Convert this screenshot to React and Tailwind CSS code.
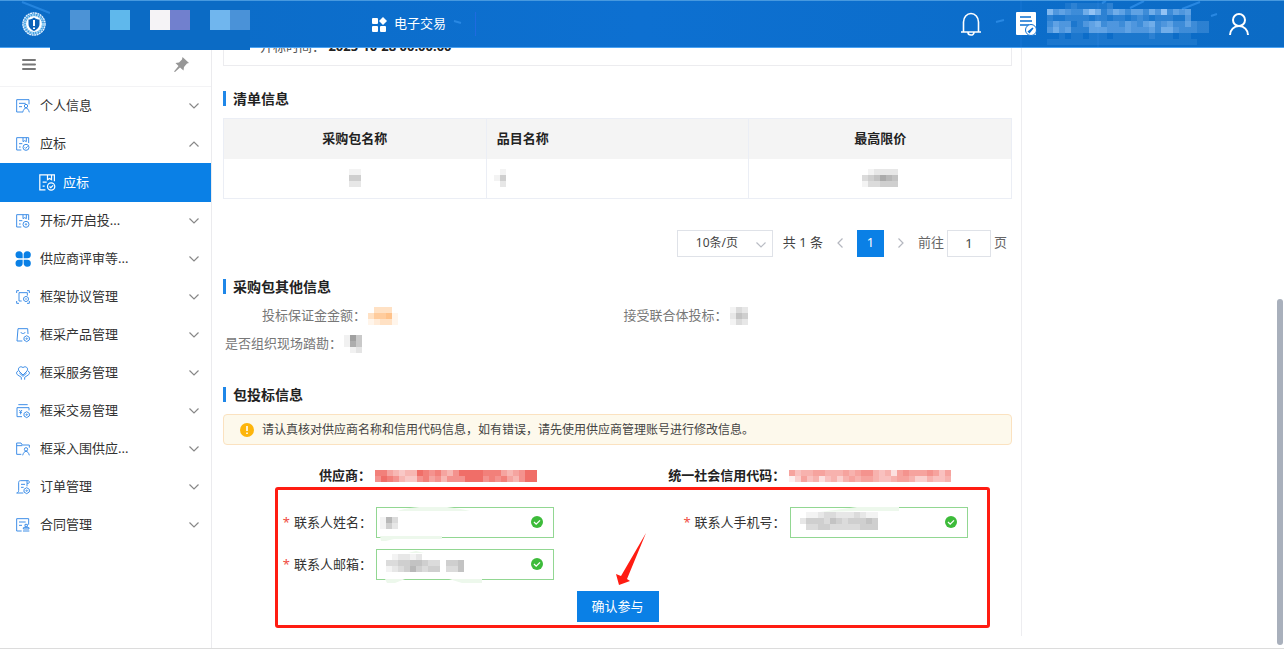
import React, { useState } from 'react';

const strokeProps = {
  viewBox: '0 0 42 42',
  fill: 'none',
  stroke: 'currentColor',
  strokeWidth: 3,
  'aria-hidden': true,
};

const hexGear = (
  <>
    <path d="M32 23l8 5v8l-8 5-8-5v-8z" />
    <circle cx="32" cy="32" r="2" />
  </>
);

const icons = {
  profile: (
    <>
      <path d="M39 16V2H2v37h18M9 13h20M9 23h9" />
      <circle cx="30" cy="21" r="5" />
      <path d="M20 40c2-8 6-13 10-13s8 5 10 13" />
    </>
  ),
  bid: (
    <>
      <path d="M16 39H2V2h36v16M21 2v12l5-3 5 3V2M9 20h10M9 30h5" />
      <circle cx="30" cy="31" r="9" />
      <path d="M26 31l3 3 6-6" />
    </>
  ),
  open: (
    <>
      <path d="M16 39H2V2h36v16M21 2v12l5-3 5 3V2M9 20h10M9 30h5" />
      <circle cx="30" cy="31" r="9" />
      <circle cx="30" cy="31" r="2" />
    </>
  ),
  supplier: (
    <g fill="#0a80e6" stroke="none">
      <path d="M9-2a10 10 0 0 0 0 21h11V9A10 10 0 0 0 9-2z" />
      <path d="M34-2a10 10 0 0 1 0 21H23V9A10 10 0 0 1 34-2z" />
      <path d="M9 44a10 10 0 0 1 0-21h11v10A10 10 0 0 1 9 44z" />
      <path d="M34 44a10 10 0 0 0 0-21H23v10a10 10 0 0 0 11 11z" />
    </g>
  ),
  agreement: (
    <>
      <path d="M2 9V2h7M33 2h7v7M2 33v7h7M33 40h7v-7" />
      <path d="M17 33H9V8h25v9" />
      <path d="M30 19l7 4v8l-7 4-7-4v-8z" />
      <circle cx="30" cy="27" r="1" />
    </>
  ),
  product: (
    <>
      <path d="M19 39H3L6 2h29l1 16M14 12c3 6 11 6 14 0" />
      {hexGear}
    </>
  ),
  service: (
    <>
      <path d="M21 27L9 15C3 6 14-2 21 5c7-7 18 1 12 10z" />
      <path d="M6 15c-6 3-5 8-2 11l12 8v7M36 15c6 3 5 8 2 11l-12 8v7M10 21l11 10 11-10" />
    </>
  ),
  trade: (
    <>
      <path d="M7 2h28M18 38H3V11h36v8M10 18l4 5 4-5M14 23v8M10 25h8" />
      {hexGear}
    </>
  ),
  shortlist: (
    <>
      <path d="M16 37H2V3h13l4 6h21v8M2 11h17" />
      <circle cx="30" cy="22" r="5" />
      <path d="M20 40c2-8 6-12 10-12s8 4 10 12" />
    </>
  ),
  order: (
    <>
      <path d="M22 39H2c5-2 6-4 6-8V7c0-3 2-5 5-5h24c4 1 4 8 0 8h-4V2M15 13h12M15 22h8M33 10v9" />
      {hexGear}
    </>
  ),
  contract: (
    <>
      <path d="M17 39H2V2h36v18M9 12h20M9 22h9" />
      <path d="M27 19h7v7h-7zM22 29h17v4H22zM21 39h19" />
    </>
  ),
};

const menu = [
  { icon: 'profile', label: '个人信息' },
  { icon: 'bid', label: '应标', open: true, children: ['应标'] },
  { icon: 'open', label: '开标/开启投...' },
  { icon: 'supplier', label: '供应商评审等...' },
  { icon: 'agreement', label: '框架协议管理' },
  { icon: 'product', label: '框采产品管理' },
  { icon: 'service', label: '框采服务管理' },
  { icon: 'trade', label: '框采交易管理' },
  { icon: 'shortlist', label: '框采入围供应...' },
  { icon: 'order', label: '订单管理' },
  { icon: 'contract', label: '合同管理' },
];

// Masked values: every digit is the strength of one 6px cell
function Mosaic({ rows, color, className = '' }) {
  const cols = Math.max(...rows.map((r) => r.length));
  return (
    <svg
      className={`shrink-0 ${className}`}
      width={cols * 6}
      height={rows.length * 6}
      shapeRendering="crispEdges"
      aria-hidden="true"
    >
      {rows.map((row, y) =>
        row.split('').map((c, x) => (
          <rect key={`${x}-${y}`} x={x * 6} y={y * 6} width="6" height="6" fill={color} opacity={Number(c) / 10} />
        ))
      )}
    </svg>
  );
}

function Chevron({ className = '' }) {
  return (
    <svg className={className} viewBox="0 0 10 6" width="10" height="6" fill="none" stroke="currentColor" strokeWidth="1.2" aria-hidden="true">
      <path d="M.5.5L5 5 9.500.5" />
    </svg>
  );
}

function Logo() {
  return (
    <svg width="24" height="24" viewBox="0 0 48 48" aria-hidden="true">
      <circle cx="24" cy="24" r="22" fill="none" stroke="#e4f2ff" strokeWidth="3" strokeDasharray="4 1" />
      <circle cx="24" cy="24" r="18" fill="none" stroke="#8fd0f6" strokeWidth="5" strokeDasharray="4 1" />
      <circle cx="24" cy="24" r="16" fill="#fff" />
      <path d="M24 11c4 3 7 4 11 4v9c0 7-5 11-11 14-6-3-11-7-11-14v-9c4 0 7-1 11-4z" fill="#0b62b8" />
      <path d="M24 16v12M24 31v3" stroke="#fff" strokeWidth="4" />
    </svg>
  );
}

function Header() {
  return (
    <header className="relative z-10 flex h-12 shrink-0 items-center border-y border-t-[#4799df] border-b-[#4ba3f3] bg-linear-to-r from-[#0b6bc5] via-[#0d70d1] to-[#0b6bc5] pr-[33px] pl-[22px] text-white">
      <svg className="absolute inset-0 h-full w-full" fill="none" stroke="#2f8fe8" aria-hidden="true">
        <path d="M22 1L50 12M198 0l8 2M230 0l16 7" strokeWidth="2" opacity=".7" />
        <path d="M454 20l7 2M996 21l8-2M1130 7l14-7M1182 8l18-7M1211 15l6-2M1102 2l4-2" strokeWidth="2" opacity=".8" />
        <path d="M1021 0v46M1098 0v46" opacity=".3" />
      </svg>
      <Logo />
      {/* masked navigation entries */}
      <div className="relative ml-1 flex h-[49px] w-[200px] shrink-0 self-start bg-[#0b6bc5] pt-[9px] pl-5">
        <span className="size-5 bg-[#4c93d6]" />
        <span className="ml-5 size-5 bg-[#5fb8ec]" />
        <span className="ml-5 size-5 bg-[#f5f3f6]" />
        <span className="size-5 bg-[#7180ce]" />
        <span className="ml-5 size-5 bg-[#70b6ee]" />
        <span className="size-5 bg-[#4a92d8]" />
      </div>
      <a href="#trade" className="relative ml-[122px] flex items-center gap-[7px] text-[13px] whitespace-nowrap">
        <svg width="15" height="15" viewBox="0 0 15 15" fill="currentColor" aria-hidden="true">
          <rect x="0" y="1" width="6" height="6" rx="1" />
          <rect x="0" y="9" width="6" height="6" rx="1" />
          <rect x="8" y="9" width="6" height="6" rx="1" />
          <path d="M11 0l4 4-4 4-4-4z" />
        </svg>
        电子交易
      </a>
      <span className="relative ml-[29px] h-6 w-px bg-[#1f6be0]" />
      <div className="relative ml-auto flex items-center">
        <button type="button" aria-label="通知">
          <svg width="22" height="24" viewBox="0 0 22 24" fill="none" stroke="currentColor" strokeWidth="1.6" aria-hidden="true">
            <path d="M1 20h20M3.500 20V10a7.500 8.500 0 0 1 15 0v10M8 20.500a3 2.500 0 0 0 6 0" />
          </svg>
        </button>
        <button type="button" aria-label="待办" className="ml-[33px]">
          <svg width="22" height="24" viewBox="0 0 22 24" aria-hidden="true">
            <rect x="1" y="0" width="20" height="23" rx="1" fill="#fff" />
            <path d="M5 5h11M5 9h12M5 13h9" stroke="#0d70d1" strokeWidth="1.400" />
            <circle cx="16" cy="18" r="5.500" fill="#fff" stroke="#0d70d1" />
            <path d="M12.500 19.500l5-4 1 1-4 5z" fill="#0d70d1" />
          </svg>
        </button>
        <Mosaic
          className="ml-2.5"
          color="#b4d8ff"
          rows={[
            '000121111120000000000000000',
            '745433686246535536483545000',
            '211222212212212321222114000',
            '354412456344354356345335322',
            '464522255544454445366433322',
            '001011011101111112111011000',
            '111111111111111111111111100',
          ]}
        />
        <button type="button" aria-label="账号" className="ml-[18px]">
          <svg width="24" height="24" viewBox="0 0 24 24" fill="none" stroke="currentColor" strokeWidth="2" aria-hidden="true">
            <circle cx="12" cy="8" r="6" />
            <path d="M3 23c0-5 4-9 9-9s9 4 9 9" />
          </svg>
        </button>
      </div>
    </header>
  );
}

function Sidebar() {
  return (
    <aside className="w-[212px] shrink-0 border-r border-[#ebebee]">
      <div className="flex h-[39px] items-center justify-between border-b border-[#f3f3f5] px-[22px] pb-1.5">
        <button type="button" aria-label="收起菜单" className="text-[#777]">
          <svg width="14" height="13" viewBox="0 0 14 13" stroke="currentColor" strokeWidth="2" strokeLinecap="round" aria-hidden="true">
            <path d="M1 2h12M1 6.500h12M1 11h12" />
          </svg>
        </button>
        <button type="button" aria-label="固定菜单" className="text-[#979797]">
          <svg width="15" height="15" viewBox="0 0 15 15" fill="currentColor" aria-hidden="true">
            <path d="M8.500 0L15 6l-2 .5-3 3.500-.5 3.500L6 10.500 1 15l-1-.5L4.500 9 1.500 6 5 5.500 8 2.500z" />
          </svg>
        </button>
      </div>
      <nav className="text-[13px] text-[#333]">
        {menu.map((item) => (
          <div key={item.label}>
            <a href="#menu" className="flex h-[38px] items-center pr-3 pl-4">
              <svg {...strokeProps} className="size-3.5 shrink-0 overflow-visible text-[#3f8fe8]">
                {icons[item.icon]}
              </svg>
              <span className="ml-2.5 flex-1">{item.label}</span>
              <Chevron className={item.open ? 'rotate-180 text-[#888]' : 'text-[#888]'} />
            </a>
            {item.children?.map((child) => (
              <a key={child} href="#bid" className="flex h-[39px] items-center bg-[#0a80e6] pl-[39px] text-white">
                <svg {...strokeProps} className="size-[17px]">
                  {icons.bid}
                </svg>
                <span className="ml-[7px]">{child}</span>
              </a>
            ))}
          </div>
        ))}
      </nav>
    </aside>
  );
}

function SectionTitle({ className = '', children }) {
  return (
    <h2 className={`flex h-[15px] items-center border-l-[3px] border-[#1f87e8] pl-[7px] text-sm font-bold text-[#222] ${className}`}>
      {children}
    </h2>
  );
}

function Pagination() {
  const [page, setPage] = useState('1');
  return (
    <div className="mt-[30px] flex h-7 items-center justify-end gap-[7px] pr-[5px] text-[13px] whitespace-nowrap text-[#444]">
      <div className="relative mr-[3px]">
        <select aria-label="每页条数" className="h-[27px] w-24 appearance-none border border-[#dfe2e8] bg-white pl-[18px] text-xs">
          <option>10条/页</option>
        </select>
        <Chevron className="absolute top-3 right-[7px] text-[#b9bcc4]" />
      </div>
      <span>共 1 条</span>
      <button type="button" aria-label="上一页" className="flex w-5 justify-center text-[#b4b7bf]">
        <Chevron className="rotate-90" />
      </button>
      <button type="button" className="size-[27px] bg-[#0a80e6] text-white">1</button>
      <button type="button" aria-label="下一页" className="flex w-5 justify-center text-[#b4b7bf]">
        <Chevron className="-rotate-90" />
      </button>
      <label className="flex items-center gap-[3px] text-[#666]">
        前往
        <input
          value={page}
          onChange={(e) => setPage(e.target.value)}
          className="h-[27px] w-11 border border-[#dfe2e8] text-center text-[#444]"
        />
        页
      </label>
    </div>
  );
}

function Field({ id, label, children }) {
  return (
    <div className="flex items-center">
      <label htmlFor={id} className="flex w-[98px] shrink-0 justify-end pr-1 whitespace-nowrap">
        <span className="mr-1 text-[#f04b42]">*</span>
        {label}：
      </label>
      <div className="relative">
        <input id={id} className="block h-[31px] w-[178px] border border-[#92d792] bg-white px-2" />
        {children}
        <svg className="absolute top-[9px] right-[11px]" width="12" height="12" viewBox="0 0 12 12" aria-hidden="true">
          <circle cx="6" cy="6" r="6" fill="#3dbb3a" />
          <path d="M3 6l2.200 2.200L9 4.400" fill="none" stroke="#fff" strokeWidth="1.300" />
        </svg>
      </div>
    </div>
  );
}

function BidForm() {
  return (
    <>
      <div className="mt-5 mr-[25px] ml-[54px] grid h-[22px] grid-cols-[7fr_5fr] items-center text-[13px] font-bold text-[#222]">
        <div className="flex items-center">
          <span className="flex w-[98px] shrink-0 justify-end pr-1 whitespace-nowrap">供应商：</span>
          <Mosaic color="#ec4a42" rows={['775434487675468888777545688', '687643367564666888676754688']} />
        </div>
        <div className="flex items-center">
          <span className="flex w-[98px] shrink-0 justify-end pr-1 whitespace-nowrap">统一社会信用代码：</span>
          <Mosaic color="#f0655e" rows={['645566555656775452676667646', '136452453565665445665335445']} />
        </div>
      </div>
      <form
        onSubmit={(e) => e.preventDefault()}
        className="mr-[22px] ml-[52px] rounded-[3px] border-[3px] border-[#ff1c12] pt-[17px] pb-[3px] text-[13px] text-[#333]"
      >
        <div className="grid grid-cols-[7fr_5fr] gap-y-[11px]">
          <Field id="name" label="联系人姓名">
            <svg className="absolute top-0 left-0" width="178" height="34" fill="#edf8ec" aria-hidden="true">
              <path d="M21 4Q38-1 54 0h17Q86 2 94 4zM4 29h62v3H18l-8 2H5z" />
            </svg>
            <Mosaic className="absolute top-2.5 left-1" color="#888" rows={['163', '142']} />
          </Field>
          <Field id="phone" label="联系人手机号">
            <svg className="absolute top-0 left-0" width="178" height="31" fill="#edf8ec" aria-hidden="true">
              <path d="M30 5L67 0h42v4H70z" />
            </svg>
            <Mosaic className="absolute top-[5px] left-2.5" color="#888" rows={['0112332223211', '2444354344454', '0334433333444']} />
          </Field>
          <Field id="email" label="联系人邮箱">
            <svg className="absolute top-0 left-0" width="178" height="35" fill="#edf8ec" aria-hidden="true">
              <path d="M32 4l8-2 8 2zM9 30h20l-10 4h-8zM73 30h33v4H86z" />
            </svg>
            <Mosaic className="absolute top-[5px] left-2.5" color="#888" rows={['0122120000000', '3344554330445', '1234643440335']} />
          </Field>
        </div>
        <div className="mt-[11px] flex justify-center pr-[30px]">
          <div className="relative">
            <button type="submit" className="block h-[31px] w-[82px] bg-[#0a80e6] text-[13px] text-white">
              确认参与
            </button>
            <svg className="pointer-events-none absolute -top-[58px] left-[38px]" width="33" height="53" fill="#ff1c12" aria-hidden="true">
              <path d="M31 0L6 43 1 41l3 11 11-4-3-2z" />
            </svg>
          </div>
        </div>
      </form>
    </>
  );
}

function Content() {
  return (
    <main className="min-w-0 flex-1 border-r border-[#ededf0] pr-[9px] pl-[11px]">
      {/* tail of the previous card, scrolled under the header */}
      <section className="flex h-[18px] flex-col justify-end border border-t-0 border-[#ececef] pb-[10px] pl-9">
        <p className="text-[13px] leading-[18px] whitespace-nowrap text-[#555]">
          开标时间： <b className="text-[#222]">2025-10-28 00:00:00</b>
        </p>
      </section>

      <SectionTitle className="mt-[25px]">清单信息</SectionTitle>
      <table className="mt-3 w-full table-fixed border border-[#ebeef5] text-[13px]">
        <thead>
          <tr className="h-10 bg-[#f4f4f4] text-[#222]">
            <th className="border-r border-[#ebeef5]">采购包名称</th>
            <th className="border-r border-[#ebeef5] pl-[10px] text-left">品目名称</th>
            <th>最高限价</th>
          </tr>
        </thead>
        <tbody>
          <tr className="h-10">
            <td className="border-r border-[#ebeef5]">
              <Mosaic className="mx-auto" color="#888" rows={['11', '44', '22']} />
            </td>
            <td className="border-r border-[#ebeef5] pl-[7px]">
              <Mosaic color="#888" rows={['01', '14', '02']} />
            </td>
            <td>
              <Mosaic className="mx-auto" color="#888" rows={['012222', '345765', '133444']} />
            </td>
          </tr>
        </tbody>
      </table>
      <Pagination />

      <SectionTitle className="mt-[22px]">采购包其他信息</SectionTitle>
      <div className="mt-2 grid grid-cols-2 text-[13px] text-[#777]">
        <div className="flex h-7 items-center gap-0.5 pl-[39px]">
          投标保证金金额：
          <Mosaic color="#ff9a3c" rows={['03330', '35561', '12331']} />
        </div>
        <div className="flex h-7 items-center gap-0.5 pl-1.5">
          接受联合体投标：
          <Mosaic color="#888" rows={['132', '254', '132']} />
        </div>
        <div className="flex h-7 items-center gap-0.5 pl-0.5">
          是否组织现场踏勘：
          <Mosaic color="#777" rows={['174', '164', '012']} />
        </div>
      </div>

      <SectionTitle className="mt-[29px]">包投标信息</SectionTitle>
      <div role="alert" className="mt-3 flex h-[31px] items-center rounded-sm border border-[#fbe2c0] bg-[#fdf9ec] pl-4 text-xs text-[#444]">
        <svg className="mr-2 shrink-0" width="14" height="14" viewBox="0 0 14 14" aria-hidden="true">
          <circle cx="7" cy="7" r="7" fill="#fdb50c" />
          <path d="M7 3v5M7 9.500v1.500" stroke="#fff" strokeWidth="1.600" />
        </svg>
        请认真核对供应商名称和信用代码信息，如有错误，请先使用供应商管理账号进行修改信息。
      </div>
      <BidForm />
    </main>
  );
}

export default function App() {
  return (
    <div className="flex h-screen flex-col overflow-hidden border-b border-[#dcdcdc] bg-white font-['Noto_Sans','Noto_Sans_CJK_SC',sans-serif]">
      <Header />
      <div className="flex min-h-0 flex-1">
        <Sidebar />
        <div className="flex min-w-0 flex-1 pb-3">
          <Content />
        </div>
        {/* free space and scrollbar */}
        <div className="flex w-[262px] shrink-0 flex-col items-end justify-end pr-px pb-[3px]">
          <div className="h-[58%] w-1.5 rounded-full bg-[#a9b0bc]" />
        </div>
      </div>
    </div>
  );
}
